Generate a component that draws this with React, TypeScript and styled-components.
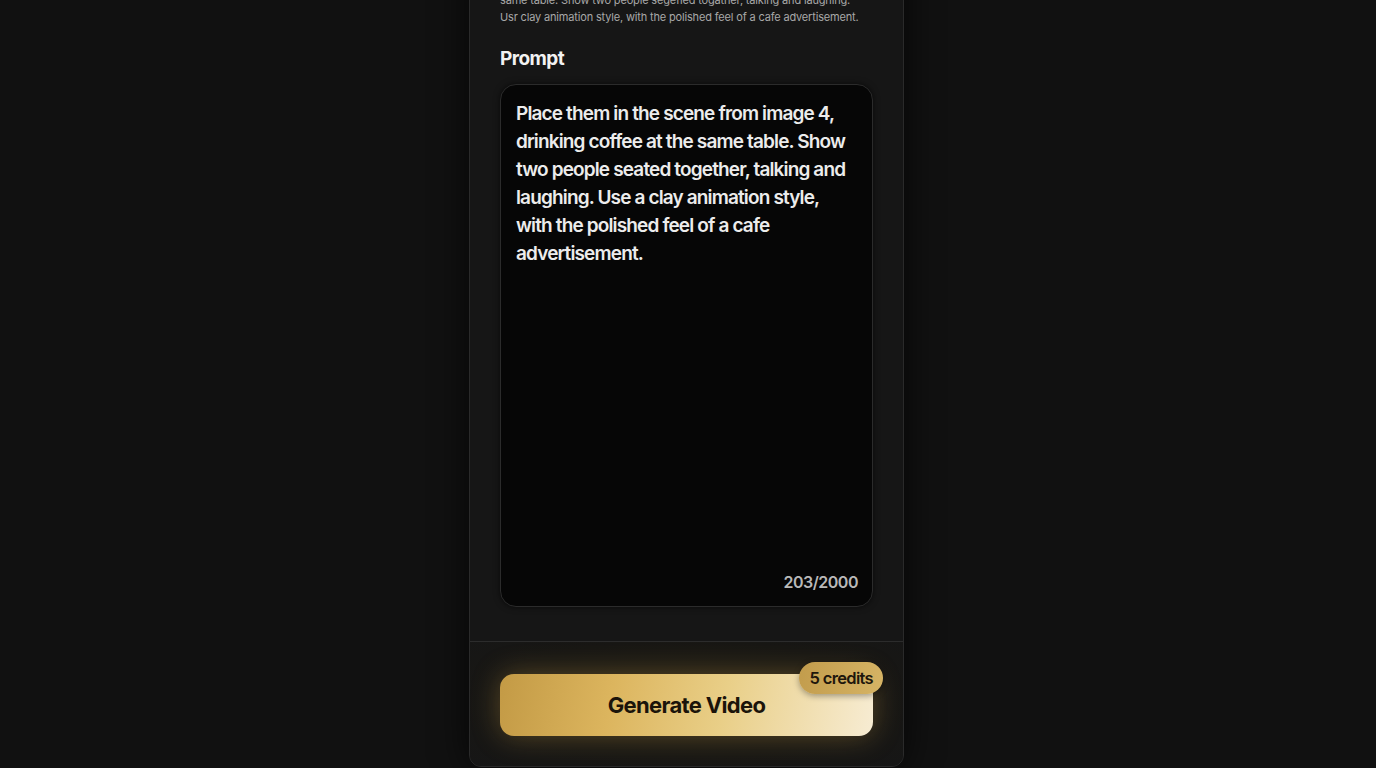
import React from 'react'
import styled, { createGlobalStyle } from 'styled-components'

const GlobalStyle = createGlobalStyle`
  *, *::before, *::after {
    box-sizing: border-box;
  }
  html, body {
    margin: 0;
    padding: 0;
    background: #111111;
    height: 100%;
    overflow: hidden;
  }
  body {
    font-family: 'Inter', 'Noto Sans', sans-serif;
    -webkit-font-smoothing: antialiased;
  }
`

const Page = styled.div`
  display: flex;
  justify-content: center;
  padding-right: 3px;
  height: 768px;
`

const Panel = styled.div`
  width: 435px;
  margin-top: -60px;
  height: 827px;
  display: flex;
  flex-direction: column;
  background: #161616;
  border: 1px solid #2a2a2a;
  border-radius: 12px;
  box-shadow: 0 0 36px rgba(0, 0, 0, 0.75);
  overflow: hidden;
`

const Body = styled.div`
  display: flex;
  flex-direction: column;
  padding: 51px 30px 34px;
`

const Description = styled.p`
  margin: 0;
  font-size: 11px;
  line-height: 17px;
  color: #a8a8a8;
  letter-spacing: -0.015em;
  white-space: nowrap;
`

const SectionTitle = styled.h2`
  margin: 21px 0 13px;
  font-size: 19px;
  line-height: 24px;
  font-weight: 700;
  color: #f2f2f2;
  letter-spacing: -0.03em;
`

const PromptBox = styled.div`
  height: 523px;
  display: flex;
  flex-direction: column;
  padding: 15px 14px 14px 15px;
  background: #060606;
  border: 1px solid #2b2b2b;
  border-radius: 16px;
  box-shadow: 0 0 6px rgba(0, 0, 0, 0.6);
`

const PromptText = styled.div`
  font-size: 19px;
  line-height: 28px;
  font-weight: 600;
  color: #ececec;
  letter-spacing: -0.045em;
  white-space: nowrap;
`

const Counter = styled.div`
  margin-top: auto;
  align-self: flex-end;
  font-size: 16px;
  line-height: 20px;
  font-weight: 600;
  color: #b9b9b9;
  letter-spacing: -0.03em;
`

const Footer = styled.div`
  flex: 1;
  display: flex;
  flex-direction: column;
  padding: 32px 30px 0;
  border-top: 1px solid #2c2c2c;
  background: radial-gradient(ellipse at 50% 45%, #1f1c14 0%, #181714 60%, #161616 100%);
`

const GenerateButton = styled.button`
  position: relative;
  height: 62px;
  border: none;
  border-radius: 14px;
  background: linear-gradient(100deg, #c39a45 0%, #dcb55e 30%, #e9cf88 60%, #f7ecd3 100%);
  box-shadow: 0 0 28px rgba(205, 160, 70, 0.35);
  font-family: inherit;
  font-size: 22px;
  font-weight: 700;
  color: #1b140a;
  letter-spacing: -0.03em;
  cursor: pointer;
`

const CreditsBadge = styled.span`
  position: absolute;
  top: -12px;
  right: -10px;
  height: 32px;
  padding: 0 10px;
  display: flex;
  align-items: center;
  border-radius: 16px;
  background: linear-gradient(100deg, #c29c4c, #d6b465);
  box-shadow: 0 2px 6px rgba(0, 0, 0, 0.35);
  font-size: 16.5px;
  font-weight: 600;
  color: #1e170c;
  letter-spacing: -0.04em;
`

const promptLines = [
  'Place them in the scene from image 4,',
  'drinking coffee at the same table. Show',
  'two people seated together, talking and',
  'laughing. Use a clay animation style,',
  'with the polished feel of a cafe',
  'advertisement.',
]

export default function App() {
  return (
    <>
      <GlobalStyle />
      <Page>
        <Panel>
          <Body>
            <Description>
              same table. Show two people segefied togather, talking and laughing.
              <br />
              Usr clay animation style, with the polished feel of a cafe advertisement.
            </Description>
            <SectionTitle>Prompt</SectionTitle>
            <PromptBox>
              <PromptText>
                {promptLines.map((line, i) => (
                  <React.Fragment key={i}>
                    {line}
                    {i < promptLines.length - 1 && <br />}
                  </React.Fragment>
                ))}
              </PromptText>
              <Counter>203/2000</Counter>
            </PromptBox>
          </Body>
          <Footer>
            <GenerateButton>
              Generate Video
              <CreditsBadge>5 credits</CreditsBadge>
            </GenerateButton>
          </Footer>
        </Panel>
      </Page>
    </>
  )
}
